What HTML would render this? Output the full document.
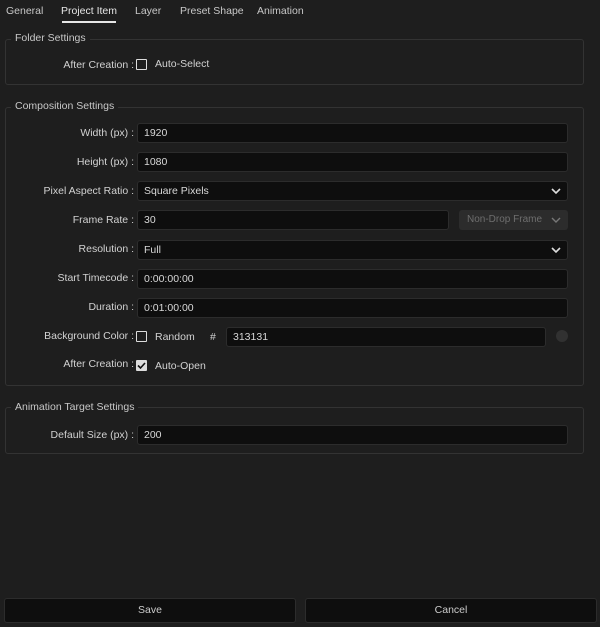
<!DOCTYPE html><html><head><style>
body{margin:0;width:600px;height:627px;background:#1e1e1e;font-family:"Liberation Sans",sans-serif;font-size:10.5px;color:#d2d2d2;position:relative;overflow:hidden}
.a{position:absolute}
.tab{top:5px;font-size:10.5px;color:#c8c8c8}
.box{position:absolute;left:5px;width:577px;border:1px solid #333;border-radius:3px}
.leg{position:absolute;background:#1e1e1e;padding:0 4px;left:11px;color:#c8c8c8}
.lab{position:absolute;right:466px;text-align:right;white-space:nowrap}
.inp{position:absolute;left:137px;width:423px;height:18px;background:#0e0e0e;border:1px solid #2c2c2c;border-radius:3px;line-height:18px;padding-left:6px;box-sizing:content-box;color:#d8d8d8}
.chk{position:absolute;width:9px;height:9px;border:1px solid #ddd;border-radius:1px}
.chev{position:absolute;right:6px;top:5px}
.btn{position:absolute;top:598px;height:23px;background:#0e0e0e;border:1px solid #2c2c2c;border-radius:3px;text-align:center;line-height:23px;color:#ccc}
</style></head><body>
<div class="a tab" style="left:6px">General</div>
<div class="a tab" style="left:61px;color:#e6e6e6">Project Item</div>
<div class="a" style="left:62px;top:21px;width:54px;height:2px;background:#e6e6e6"></div>
<div class="a tab" style="left:135px">Layer</div>
<div class="a tab" style="left:180px">Preset Shape</div>
<div class="a tab" style="left:257px">Animation</div>

<div class="box" style="top:39px;height:44px"></div>
<div class="leg" style="top:32px">Folder Settings</div>
<div class="lab" style="top:59px">After Creation :</div>
<div class="chk" style="left:136px;top:59px"></div>
<div class="a" style="left:155px;top:58px">Auto-Select</div>

<div class="box" style="top:107px;height:277px"></div>
<div class="leg" style="top:100px">Composition Settings</div>
<div class="lab" style="top:127px">Width (px) :</div><div class="inp" style="top:123px">1920</div>
<div class="lab" style="top:156px">Height (px) :</div><div class="inp" style="top:152px">1080</div>
<div class="lab" style="top:185px">Pixel Aspect Ratio :</div><div class="inp" style="top:181px">Square Pixels<svg class="chev" width="10" height="8"><path d="M1 2 L5 6 L9 2" stroke="#ddd" stroke-width="1.6" fill="none"/></svg></div>
<div class="lab" style="top:214px">Frame Rate :</div><div class="inp" style="top:210px;width:304px">30</div>
<div class="a" style="left:459px;top:210px;width:109px;height:20px;background:#2c2c2c;border-radius:3px;color:#6e6e6e;line-height:20px;padding-left:8px;box-sizing:border-box;font-size:10px">Non-Drop Frame<svg style="position:absolute;right:7px;top:6px" width="10" height="8"><path d="M1 2 L5 6 L9 2" stroke="#777" stroke-width="1.4" fill="none"/></svg></div>
<div class="lab" style="top:243px">Resolution :</div><div class="inp" style="top:240px">Full<svg class="chev" width="10" height="8"><path d="M1 2 L5 6 L9 2" stroke="#ddd" stroke-width="1.6" fill="none"/></svg></div>
<div class="lab" style="top:272px">Start Timecode :</div><div class="inp" style="top:269px">0:00:00:00</div>
<div class="lab" style="top:301px">Duration :</div><div class="inp" style="top:298px">0:01:00:00</div>
<div class="lab" style="top:330px">Background Color :</div>
<div class="chk" style="left:136px;top:331px"></div>
<div class="a" style="left:155px;top:331px">Random</div>
<div class="a" style="left:210px;top:331px">#</div>
<div class="inp" style="top:327px;left:226px;width:312px">313131</div>
<div class="a" style="left:556px;top:330px;width:12px;height:12px;border-radius:50%;background:#313131"></div>
<div class="lab" style="top:358px">After Creation :</div>
<div class="a" style="left:136px;top:360px;width:11px;height:11px;background:#ddd;border-radius:1px"><svg width="11" height="11"><path d="M2 5.5 L4.5 8 L9 3" stroke="#111" stroke-width="1.6" fill="none"/></svg></div>
<div class="a" style="left:155px;top:360px">Auto-Open</div>

<div class="box" style="top:407px;height:45px"></div>
<div class="leg" style="top:401px">Animation Target Settings</div>
<div class="lab" style="top:429px">Default Size (px) :</div><div class="inp" style="top:425px">200</div>

<div class="btn" style="left:4px;width:290px">Save</div>
<div class="btn" style="left:305px;width:290px">Cancel</div>
</body></html>
